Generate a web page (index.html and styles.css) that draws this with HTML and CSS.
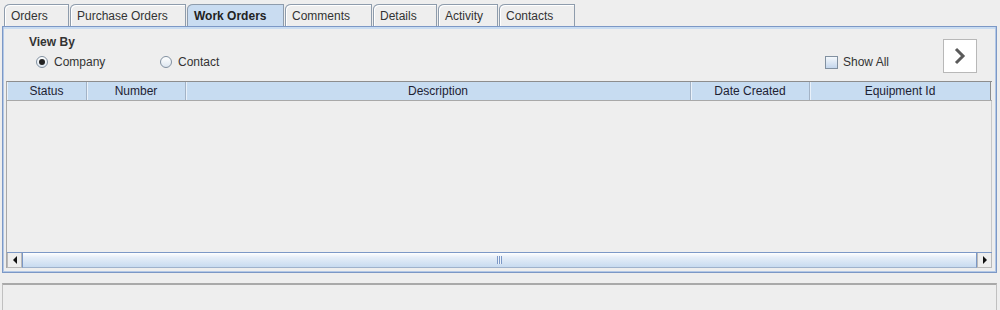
FILE: index.html
```html
<!DOCTYPE html>
<html lang="en">
<head>
    <meta charset="UTF-8">
    <title>Work Orders</title>
    <link rel="stylesheet" href="styles.css">
</head>
<body>
    <div class="tabs">
        <div class="tab t-orders">Orders</div>
        <div class="tab t-po">Purchase Orders</div>
        <div class="tab t-wo selected">Work Orders</div>
        <div class="tab t-comments">Comments</div>
        <div class="tab t-details">Details</div>
        <div class="tab t-activity">Activity</div>
        <div class="tab t-contacts">Contacts</div>
    </div>

    <div class="panel">
        <div class="toolbar">
            <div class="viewby">
                <div class="viewby-title">View By</div>
                <div class="radios">
                    <label class="radio-item company"><span class="radio on"></span>Company</label>
                    <label class="radio-item"><span class="radio"></span>Contact</label>
                </div>
            </div>
            <label class="showall"><span class="check"></span>Show All</label>
            <div class="next-btn">
                <svg width="14" height="18" viewBox="0 0 14 18"><path d="M3 2 L10 9 L3 16" fill="none" stroke="#5a5a5a" stroke-width="3"/></svg>
            </div>
        </div>

        <div class="table">
            <div class="thead">
                <div class="th c-status">Status</div>
                <div class="th c-number">Number</div>
                <div class="th c-desc">Description</div>
                <div class="th c-date">Date Created</div>
                <div class="th c-equip">Equipment Id</div>
            </div>
            <div class="tbody"></div>
            <div class="hscroll">
                <div class="arrow"><svg width="6" height="8" viewBox="0 0 6 8"><path d="M5 0 L5 8 L1 4 Z" fill="#111"/></svg></div>
                <div class="thumb"><span class="grip"></span></div>
                <div class="arrow"><svg width="6" height="8" viewBox="0 0 6 8"><path d="M1 0 L1 8 L5 4 Z" fill="#111"/></svg></div>
            </div>
        </div>
    </div>

    <div class="status"></div>
</body>
</html>
```

FILE: styles.css
```css
body {
    margin: 0;
    padding: 0;
    background-color: #eeeeee;
    font-family: "Liberation Sans", Arial, sans-serif;
    font-size: 12px;
    color: #333;
    width: 1000px;
    height: 310px;
    overflow: hidden;
}

/* tab strip */
.tabs {
    display: flex;
    padding: 4px 0 0 4px;
    height: 26px;
    box-sizing: border-box;
}
.tab {
    height: 22px;
    box-sizing: border-box;
    border: 1px solid #8e9cac;
    border-bottom: none;
    border-top-left-radius: 6px 5px;
    margin-right: 1px;
    padding: 0 6px;
    line-height: 22px;
    background-color: #eeeeee;
    color: #333;
    box-shadow: inset 1px 1px 0 #ffffff;
}
.tab.selected {
    background-color: #c9dcf1;
    font-weight: bold;
    color: #222;
    box-shadow: none;
}
.t-orders { width: 65px; }
.t-po { width: 116px; }
.t-wo { width: 97px; }
.t-comments { width: 87px; }
.t-details { width: 64px; }
.t-activity { width: 60px; }
.t-contacts { width: 76px; }

/* main panel */
.panel {
    margin: 0 3px 0 2px;
    height: 247px;
    box-sizing: border-box;
    border: 1px solid #7c98c6;
    box-shadow: inset 1px 0 0 #b3c8e6, inset -1px 0 0 #b3c8e6, inset 0 2px 0 #c9dcf1, inset 0 -1px 0 #b3c8e6;
    padding: 3px 3px 4px 3px;
    display: flex;
    flex-direction: column;
}

.toolbar {
    display: flex;
    align-items: flex-start;
    height: 51px;
}
.viewby {
    padding: 5px 0 0 23px;
    width: 795px;
}
.viewby-title {
    font-weight: bold;
    color: #333;
    height: 15px;
}
.radios {
    display: flex;
    padding: 4px 0 0 7px;
}
.radio-item {
    display: flex;
    align-items: center;
    height: 15px;
}
.radio-item.company {
    width: 124px;
}
.radio {
    width: 10px;
    height: 10px;
    border: 1px solid #8190a0;
    border-radius: 50%;
    background: linear-gradient(#ffffff, #dde6f0);
    margin-right: 6px;
    position: relative;
}
.radio.on::after {
    content: "";
    position: absolute;
    left: 2px;
    top: 2px;
    width: 6px;
    height: 6px;
    border-radius: 50%;
    background-color: #222;
}
.showall {
    display: flex;
    align-items: center;
    margin-top: 25px;
    padding-left: 1px;
    width: 118px;
}
.check {
    width: 11px;
    height: 11px;
    border: 1px solid #8190a0;
    background: linear-gradient(#f4f8fc, #c4d6ec);
    margin-right: 5px;
}
.next-btn {
    width: 32px;
    height: 32px;
    margin-top: 9px;
    border: 1px solid #b8b8b8;
    background-color: #ffffff;
    display: flex;
    align-items: center;
    justify-content: center;
}

/* table */
.table {
    flex: 1;
    display: flex;
    flex-direction: column;
    border-top: 1px solid #8d8d8d;
    border-left: 1px solid #a8a8a8;
    width: 985px;
}
.thead {
    display: flex;
    height: 18px;
    border-bottom: 1px solid #a8a8a8;
}
.th {
    box-sizing: border-box;
    background-color: #c7dcf1;
    border-right: 1px solid #a3b3c6;
    box-shadow: inset 1px 0 0 #e9f1fa;
    text-align: center;
    line-height: 18px;
    color: #1d2233;
}
.c-status { width: 80px; }
.c-number { width: 99px; }
.c-desc { width: 505px; }
.c-date { width: 119px; }
.c-equip { width: 181px; border-right: 1px solid #8d8d8d; }
.tbody {
    flex: 1;
    border-right: 1px solid #c8c8c8;
}

.hscroll {
    display: flex;
    height: 16px;
    border-top: 1px solid #7c98c6;
    box-sizing: border-box;
}
.arrow {
    width: 15px;
    box-sizing: border-box;
    border: 1px solid #b9b9b9;
    border-top: none;
    background-color: #eeeeee;
    display: flex;
    align-items: center;
    justify-content: center;
}
.thumb {
    flex: 1;
    background: linear-gradient(#ffffff 0%, #e6eef8 30%, #c8dbf0 100%);
    border-left: 1px solid #7c98c6;
    border-right: 1px solid #7c98c6;
    border-bottom: 1px solid #9fb2cc;
    display: flex;
    align-items: center;
    justify-content: center;
}
.grip {
    width: 5px;
    height: 8px;
    background: repeating-linear-gradient(90deg, #7c98c6 0, #7c98c6 1px, #eef3fa 1px, #eef3fa 2px);
}

/* status bar */
.status {
    margin: 10px 3px 0 2px;
    height: 30px;
    border-top: 2px solid #a9a9a9;
    border-left: 1px solid #c0c0c0;
    border-right: 1px solid #c0c0c0;
    background-color: #eeeeee;
}
```
